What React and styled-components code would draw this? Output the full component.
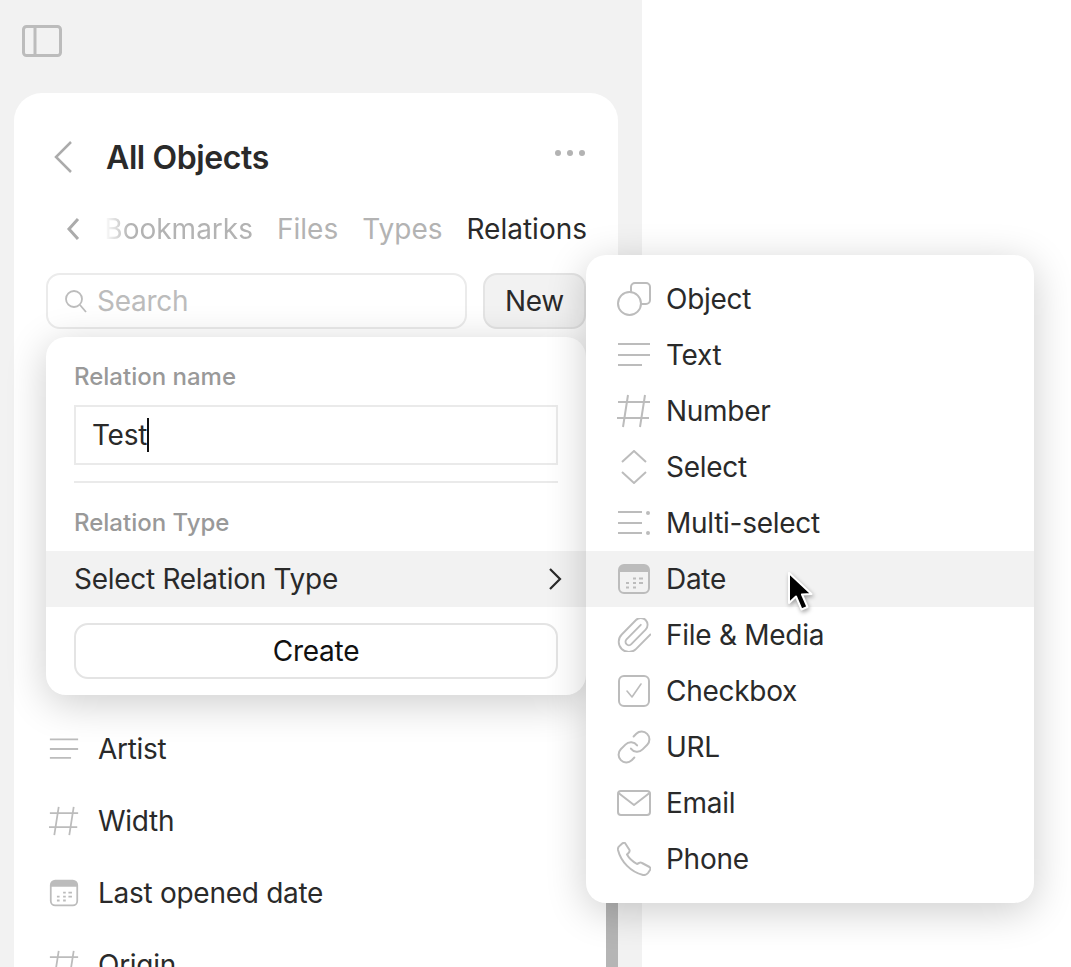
import styled, { createGlobalStyle } from "styled-components"

const GlobalStyle = createGlobalStyle`
    html, body {
        margin: 0;
        height: 967px;
        overflow: hidden;
        background: #fff;
    }
    body {
        font-family: "Inter", "Liberation Sans", sans-serif;
        color: #2a2a2a;
    }
`

const Glyph = ({ size = 34, children }) => (
    <IconSvg width={size} height={size} viewBox="0 0 34 34" fill="none" stroke="#bcbcbc" strokeWidth="2" strokeLinecap="round" strokeLinejoin="round">
        {children}
    </IconSvg>
)

const ObjectIcon = (p) => (
    <Glyph {...p}>
        <circle cx="12.5" cy="21.5" r="11.5" />
        <path d="M14 10V5a4 4 0 0 1 4-4h11a4 4 0 0 1 4 4v13a4 4 0 0 1-4 4h-5" />
    </Glyph>
)

const TextIcon = (p) => (
    <Glyph {...p}>
        <path d="M1 6h32M1 17h32M1 27h24" strokeLinecap="butt" />
    </Glyph>
)

const NumberIcon = (p) => (
    <Glyph {...p}>
        <path d="M1 8h32M0 24h32M11 1 6 33M28 1l-5 32" strokeLinecap="butt" />
    </Glyph>
)

const SelectIcon = (p) => (
    <Glyph {...p}>
        <path d="M5 12 17 1l12 11M5 22l12 11 12-11" strokeLinejoin="miter" strokeLinecap="butt" />
    </Glyph>
)

const MultiIcon = (p) => (
    <Glyph {...p}>
        <path d="M1 6h24M1 17h24M1 27h24" strokeLinecap="butt" />
        <circle cx="31" cy="7" r="2" fill="#bcbcbc" stroke="none" />
        <circle cx="31" cy="27" r="2" fill="#bcbcbc" stroke="none" />
    </Glyph>
)

const DateIcon = (p) => (
    <Glyph {...p}>
        <path d="M2 10V8a5 5 0 0 1 5-5h20a5 5 0 0 1 5 5v2z" fill="#bcbcbc" stroke="none" />
        <rect x="2" y="3" width="30" height="28" rx="5" />
        <path d="M16 16.500h3M22 16.500h4M9 21h3M16 21h3M22 21h4M9 25.500h3M16 25.500h3" strokeWidth="2" strokeLinecap="butt" />
    </Glyph>
)

const FileIcon = (p) => (
    <Glyph {...p}>
        <path
            transform="translate(-3.400 -3.400) scale(1.700)"
            strokeWidth="1.100"
            d="m16 6-8.414 8.586a2 2 0 0 0 2.829 2.828l8.414-8.586a4 4 0 1 0-5.657-5.657l-8.379 8.551a6 6 0 1 0 8.485 8.485l8.379-8.551"
        />
    </Glyph>
)

const CheckIcon = (p) => (
    <Glyph {...p}>
        <rect x="2" y="2" width="30" height="30" rx="5" />
        <path d="m10 17 5 6 9-13" strokeWidth="1.600" />
    </Glyph>
)

const UrlIcon = (p) => (
    <Glyph {...p}>
        <g transform="translate(-1.600 -1.600) scale(1.550)" strokeWidth="1.300">
            <path d="M10 13a5 5 0 0 0 7.540.54l3-3a5 5 0 0 0-7.070-7.070l-1.720 1.710" />
            <path d="M14 11a5 5 0 0 0-7.540-.54l-3 3a5 5 0 0 0 7.070 7.070l1.710-1.710" />
        </g>
    </Glyph>
)

const EmailIcon = (p) => (
    <Glyph {...p}>
        <rect x="1" y="5" width="32" height="24" rx="3" />
        <path d="m1.500 7 15.500 12L32.500 7" />
    </Glyph>
)

const PhoneIcon = (p) => (
    <Glyph {...p}>
        <path d="M8 1l4.500 7q.5 1.500-1 3L10 12.500Q13 18 20 22l2-1q1.500-1 3 0l7.500 4q1.500 1 .5 3l-2 3q-2 2.500-5 2C14 30 4 20 1 8q-.5-3 2-4.500L5.500 1.300Q7 .3 8 1z" />
    </Glyph>
)

const relationTypes = [
    { name: "Object", Icon: ObjectIcon },
    { name: "Text", Icon: TextIcon },
    { name: "Number", Icon: NumberIcon },
    { name: "Select", Icon: SelectIcon },
    { name: "Multi-select", Icon: MultiIcon },
    { name: "Date", Icon: DateIcon, active: true },
    { name: "File & Media", Icon: FileIcon },
    { name: "Checkbox", Icon: CheckIcon },
    { name: "URL", Icon: UrlIcon },
    { name: "Email", Icon: EmailIcon },
    { name: "Phone", Icon: PhoneIcon },
]

const relations = [
    { name: "Artist", Icon: TextIcon },
    { name: "Width", Icon: NumberIcon },
    { name: "Last opened date", Icon: DateIcon },
    { name: "Origin", Icon: NumberIcon },
]

export default function App() {
    return (
        <Page>
            <GlobalStyle />
            <Sidebar>
                <ToggleButton>
                    <svg width="40" height="32" viewBox="0 0 40 32" fill="none" stroke="#bcbcbc" strokeWidth="3">
                        <rect x="1.500" y="1.500" width="37" height="29" rx="3" />
                        <path d="M13 2v28" />
                    </svg>
                </ToggleButton>

                <Card>
                    <Header>
                        <svg width="20" height="32" viewBox="0 0 20 32" fill="none" stroke="#ababab" strokeWidth="2.500">
                            <path d="M18 1 3 16l15 15" />
                        </svg>
                        <Title>All Objects</Title>
                        <Dots><i /><i /><i /></Dots>
                    </Header>

                    <Tabs>
                        <IconSvg width="14" height="22" viewBox="0 0 14 22" fill="none" stroke="#ababab" strokeWidth="3">
                            <path d="M12 1 3 11l9 10" />
                        </IconSvg>
                        <TabStrip>
                            <Tab $faded>Bookmarks</Tab>
                            <Tab>Files</Tab>
                            <Tab>Types</Tab>
                            <Tab $active>Relations</Tab>
                        </TabStrip>
                    </Tabs>

                    <SearchRow>
                        <SearchBox>
                            <svg width="24" height="24" viewBox="0 0 24 24" fill="none" stroke="#bcbcbc" strokeWidth="1.800">
                                <circle cx="10" cy="10" r="8" />
                                <path d="m16 16 6 7" />
                            </svg>
                            Search
                        </SearchBox>
                        <NewButton>New</NewButton>
                    </SearchRow>

                    <RelationList>
                        {relations.map(({ name, Icon }) => (
                            <RelationRow key={name}>
                                <Icon size={30} />
                                {name}
                            </RelationRow>
                        ))}
                    </RelationList>

                    <ScrollThumb />

                    <Popover>
                        <FieldLabel>Relation name</FieldLabel>
                        <NameField>
                            Test<Caret />
                        </NameField>
                        <Divider />
                        <FieldLabel>Relation Type</FieldLabel>
                        <TypeSelect>
                            Select Relation Type
                            <svg width="14" height="22" viewBox="0 0 14 22" fill="none" stroke="#2a2a2a" strokeWidth="2.200">
                                <path d="m2 1 10 10L2 21" />
                            </svg>
                        </TypeSelect>
                        <CreateButton>Create</CreateButton>
                    </Popover>

                    <TypeMenu>
                        {relationTypes.map(({ name, Icon, active }) => (
                            <TypeRow key={name} $active={active}>
                                <Icon />
                                {name}
                            </TypeRow>
                        ))}
                    </TypeMenu>

                    <Pointer width="26" height="42" viewBox="0 0 26 42">
                        <path d="M2 2v30l7-6.500 5.500 13 6-2.500-5.500-12.500 9.500-.5z" fill="#000" stroke="#fff" strokeWidth="2" strokeLinejoin="round" />
                    </Pointer>
                </Card>
            </Sidebar>
        </Page>
    )
}

const Page = styled.div`
    display: flex;
    height: 967px;
`

const IconSvg = styled.svg`
    flex-shrink: 0;
`

const Sidebar = styled.aside`
    width: 642px;
    height: 967px;
    box-sizing: border-box;
    background: #f2f2f2;
    padding: 25px 24px 0 14px;
`

const ToggleButton = styled.div`
    display: flex;
    height: 32px;
    margin-left: 8px;
`

const Card = styled.section`
    position: relative;
    height: 874px;
    margin-top: 36px;
    box-sizing: border-box;
    padding: 44px 32px 0;
    background: #fff;
    border-radius: 28px 28px 0 0;
`

const Header = styled.header`
    display: flex;
    align-items: center;
    height: 40px;
    padding-left: 7px;
`

const Title = styled.h1`
    flex: 1;
    margin: 0 0 0 33px;
    font-size: 32px;
    font-weight: 600;
    letter-spacing: -0.4px;
`

const Dots = styled.div`
    display: flex;
    gap: 6px;
    margin: 0 1px 8px 0;

    i {
        width: 6px;
        height: 6px;
        border-radius: 50%;
        background: #b3b3b3;
    }
`

const Tabs = styled.nav`
    display: flex;
    align-items: center;
    justify-content: space-between;
    height: 40px;
    margin: 32px -1px 0 0;
    padding-left: 20px;
`

const TabStrip = styled.div`
    display: flex;
    gap: 24px;
`

const Tab = styled.span`
    font-size: 28px;
    color: ${(props) => (props.$active ? "#2a2a2a" : "#b3b3b3")};
    ${(props) => props.$faded && "mask-image: linear-gradient(90deg, transparent 0, #000 26px);"}
`

const SearchRow = styled.div`
    display: flex;
    gap: 16px;
    height: 56px;
    margin-top: 24px;
`

const SearchBox = styled.div`
    display: flex;
    align-items: center;
    gap: 9px;
    width: 421px;
    box-sizing: border-box;
    padding-left: 16px;
    border: 2px solid #ebebeb;
    border-radius: 14px;
    font-size: 28px;
    letter-spacing: -0.28px;
    color: #bcbcbc;
`

const NewButton = styled.button`
    flex: 1;
    padding: 0;
    border: 2px solid #e4e4e4;
    border-radius: 14px;
    background: #f2f2f2;
    font: inherit;
    font-size: 28px;
    letter-spacing: -0.28px;
    color: #2a2a2a;
`

const RelationList = styled.ul`
    margin: 384px 0 0;
    padding: 0;
    list-style: none;
`

const RelationRow = styled.li`
    display: flex;
    align-items: center;
    gap: 19px;
    height: 72px;
    padding-left: 3px;
    font-size: 28px;
    letter-spacing: -0.28px;
`

const ScrollThumb = styled.div`
    position: absolute;
    right: 0;
    bottom: 0;
    width: 12px;
    height: 120px;
    background: #b5b5b5;
`

const Popover = styled.div`
    position: absolute;
    left: 32px;
    top: 244px;
    width: 540px;
    height: 358px;
    box-sizing: border-box;
    padding-top: 24px;
    background: #fff;
    border-radius: 20px;
    box-shadow: 0 8px 40px rgba(0, 0, 0, 0.2);
`

const FieldLabel = styled.div`
    margin-left: 28px;
    height: 32px;
    line-height: 32px;
    font-size: 24px;
    font-weight: 500;
    color: #999;
`

const NameField = styled.div`
    display: flex;
    align-items: center;
    height: 60px;
    box-sizing: border-box;
    margin: 12px 28px 16px;
    padding-left: 16px;
    border: 2px solid #eaeaea;
    font-size: 28px;
    letter-spacing: -0.28px;
`

const Caret = styled.span`
    width: 2px;
    height: 34px;
    background: #111;
`

const Divider = styled.div`
    height: 2px;
    margin: 0 28px 24px;
    background: #eaeaea;
`

const TypeSelect = styled.div`
    display: flex;
    align-items: center;
    justify-content: space-between;
    height: 56px;
    margin-top: 12px;
    padding: 0 24px 0 28px;
    background: #f2f2f2;
    font-size: 28px;
    letter-spacing: -0.28px;
`

const CreateButton = styled.button`
    display: block;
    width: 484px;
    height: 56px;
    margin: 16px 28px 0;
    padding: 0;
    border: 2px solid #e4e4e4;
    border-radius: 14px;
    background: #fff;
    font: inherit;
    font-size: 28px;
    letter-spacing: -0.28px;
    color: #111;
`

const TypeMenu = styled.div`
    position: absolute;
    left: 572px;
    top: 162px;
    width: 448px;
    box-sizing: border-box;
    padding: 16px 0;
    background: #fff;
    border-radius: 20px;
    box-shadow: 0 8px 40px rgba(0, 0, 0, 0.2);
`

const TypeRow = styled.div`
    display: flex;
    align-items: center;
    gap: 15px;
    height: 56px;
    padding-left: 31px;
    font-size: 28px;
    letter-spacing: -0.28px;
    background: ${(props) => (props.$active ? "#f2f2f2" : "transparent")};
`

const Pointer = styled.svg`
    position: absolute;
    left: 773px;
    top: 478px;
    filter: drop-shadow(1px 2px 2px rgba(0, 0, 0, 0.35));
`
